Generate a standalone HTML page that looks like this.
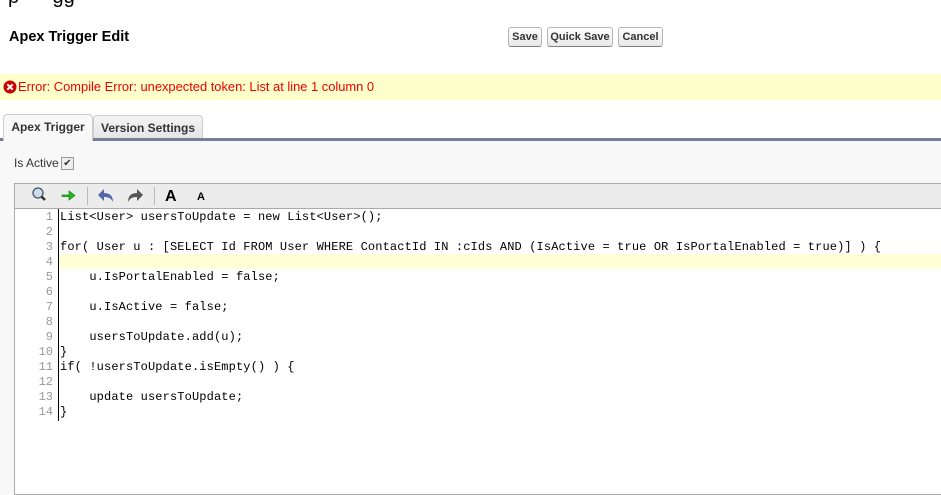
<!DOCTYPE html>
<html><head><meta charset="utf-8">
<style>
body{margin:0;width:941px;height:495px;overflow:hidden;background:#fff;font-family:"Liberation Sans",Arial,sans-serif;position:relative}
.abs{position:absolute}
.title{left:9px;top:29px;font-size:14.5px;font-weight:bold;color:#000}
.btn{top:27px;height:20px;border:1px solid #b5b5b5;border-bottom-color:#7f7f7f;border-radius:3px;background:linear-gradient(#fff,#e8e8e8);font-size:11px;font-weight:bold;line-height:19px;text-align:center;color:#333;box-sizing:border-box}
.err{left:0;top:74px;width:941px;height:26px;background:#ffffcc}
.errt{left:18px;top:79px;font-size:12.9px;color:#e00}
.tab{top:115px;height:25px;border:1px solid #ccc;border-bottom:none;border-radius:4px 4px 0 0;font-size:12px;font-weight:bold;color:#333;line-height:24px;text-align:center;box-sizing:border-box}
.code{font-family:"Liberation Mono",monospace;font-size:12px;line-height:15px;white-space:pre;color:#000;letter-spacing:0.13px}
.ln{font-family:"Liberation Mono",monospace;font-size:12px;line-height:15px;color:#999;text-align:right;white-space:pre}
</style></head><body>
<div class="abs" style="left:8px;top:-14px;font-size:20px;color:#000">p&nbsp;&nbsp;&nbsp;&nbsp;&nbsp;&nbsp;gg</div>
<div class="abs title">Apex Trigger Edit</div>
<div class="abs btn" style="left:508px;width:34px">Save</div>
<div class="abs btn" style="left:547px;width:66px">Quick Save</div>
<div class="abs btn" style="left:618px;width:45px">Cancel</div>
<div class="abs err"></div>
<svg class="abs" style="left:3px;top:80px" width="14" height="14" viewBox="0 0 14 14"><circle cx="7" cy="7" r="6.5" fill="#c00"/><path d="M4.3 4.3L9.7 9.7M9.7 4.3L4.3 9.7" stroke="#fff" stroke-width="2"/></svg>
<div class="abs errt">Error: Compile Error: unexpected token: List at line 1 column 0</div>
<div class="abs tab" style="left:3px;width:90px;background:#f8f8f8;top:114px;height:27px;z-index:2">Apex Trigger</div>
<div class="abs tab" style="left:93px;width:110px;background:linear-gradient(#f4f4f4,#e4e4e4)">Version Settings</div>
<div class="abs" style="left:0;top:138px;width:941px;height:3px;background:#747e96"></div>
<div class="abs" style="left:0;top:141px;width:941px;height:354px;background:#f8f8f8"></div>
<div class="abs" style="left:14px;top:156px;font-size:12px;color:#333">Is Active</div>
<div class="abs" style="left:61px;top:157px;width:11px;height:11px;border:1px solid #999;background:#eee;font-size:10px;line-height:11px;text-align:center;color:#333">✔</div>
<div class="abs" style="left:14px;top:183px;width:927px;height:312px;border:1px solid #aaa;border-right:none;background:#fff;box-sizing:border-box"></div>
<div class="abs" style="left:15px;top:184px;width:926px;height:24px;background:#ececec;border-bottom:1px solid #aaa"></div>
<svg class="abs" style="left:30px;top:186px" width="200" height="20" viewBox="0 0 200 20">
<circle cx="8" cy="7" r="5" fill="#cde" stroke="#456" stroke-width="1.3"/><path d="M11.5 10.5L15 14" stroke="#333" stroke-width="2.5"/>
<path d="M32 9H39V5L45 9.5L39 14V10.5H32Z" fill="#2b2" stroke="#181" stroke-width=".7"/>
<rect x="57" y="1" width="1" height="18" fill="#bbb"/>
<path d="M68 9L74 3V7C80 7 83 10 83 16C81 12 78 11 74 11V15Z" fill="#56a" />
<path d="M113 9L107 3V7C101 7 98 10 98 16C100 12 103 11 107 11V15Z" fill="#555"/>
<rect x="124" y="1" width="1" height="18" fill="#bbb"/>
<text x="135" y="15" font-family="Liberation Sans" font-weight="bold" font-size="16">A</text>
<text x="167" y="14" font-family="Liberation Sans" font-weight="bold" font-size="11">A</text>
</svg>
<div class="abs" style="left:59px;top:254px;width:882px;height:15px;background:#ffffd8"></div>
<div class="abs" style="left:58px;top:209px;width:1px;height:212px;background:#000"></div>
<div class="abs ln" style="left:20px;top:210px;width:33px">1
2
3
4
5
6
7
8
9
10
11
12
13
14</div>
<div class="abs code" style="left:60px;top:210px">List&lt;User&gt; usersToUpdate = new List&lt;User&gt;();

for( User u : [SELECT Id FROM User WHERE ContactId IN :cIds AND (IsActive = true OR IsPortalEnabled = true)] ) {

    u.IsPortalEnabled = false;

    u.IsActive = false;

    usersToUpdate.add(u);
}
if( !usersToUpdate.isEmpty() ) {

    update usersToUpdate;
}</div>
</body></html>
